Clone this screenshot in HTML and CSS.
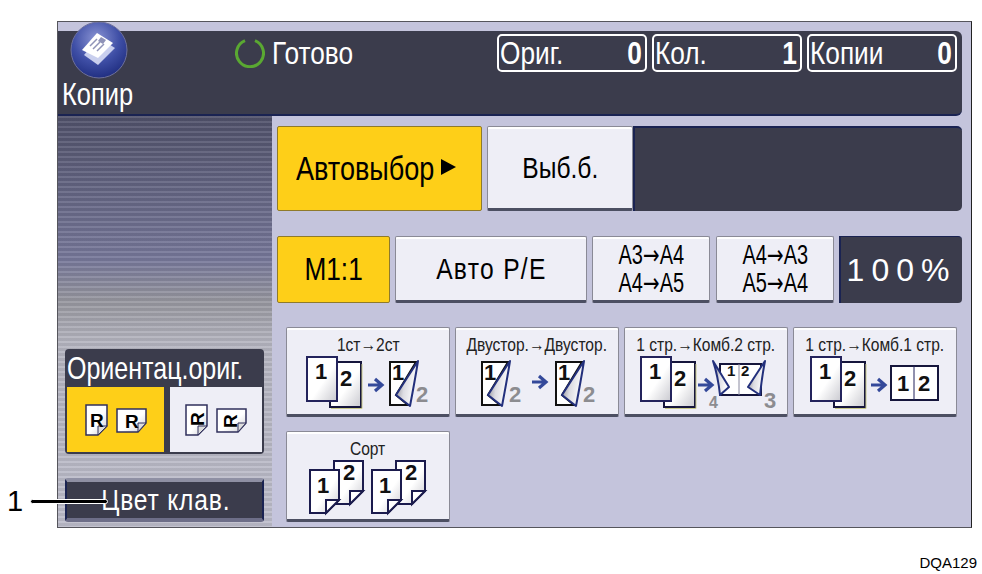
FILE: index.html
```html
<!DOCTYPE html>
<html lang="ru">
<head>
    <meta charset="UTF-8">
    <title>Копир</title>
    <link rel="stylesheet" href="styles.css">
</head>
<body>
<!-- shared icon parts -->
<svg class="defs" aria-hidden="true">
    <defs>
        <linearGradient id="sheet" x1="0" y1="0" x2="1" y2="1">
            <stop offset="0.55" stop-color="#ffffff"/>
            <stop offset="1" stop-color="#c9c9cf"/>
        </linearGradient>
        <linearGradient id="fold" x1="0" y1="0" x2="1" y2="0.3">
            <stop offset="0" stop-color="#77777f"/>
            <stop offset="0.5" stop-color="#dcdce2"/>
            <stop offset="1" stop-color="#ffffff"/>
        </linearGradient>
        <radialGradient id="ball" cx="0.45" cy="0.3" r="0.75">
            <stop offset="0" stop-color="#8a94d4"/>
            <stop offset="0.55" stop-color="#3f4fa6"/>
            <stop offset="1" stop-color="#1c2a7c"/>
        </radialGradient>
        <symbol id="pair" viewBox="0 0 56 52" overflow="visible">
            <rect x="24" y="6" width="31" height="45" fill="url(#sheet)" stroke="#16163c" stroke-width="2"/>
            <path d="M25 52.500H56V8" fill="none" stroke="#c9c98a" stroke-width="1"/>
            <text x="34" y="30" class="num">2</text>
            <rect x="1" y="1" width="30" height="44" fill="url(#sheet)" stroke="#23235c" stroke-width="2"/>
            <text x="9" y="23" class="num">1</text>
        </symbol>
        <symbol id="flip" viewBox="0 0 32 47" overflow="visible">
            <path d="M1 2H27L7 35L19 45H1Z" fill="#fff" stroke="#111" stroke-width="2"/>
            <path d="M29 1L7 35L21 46Q26 20 29 1Z" fill="url(#fold)" stroke="#23307c" stroke-width="2" stroke-linejoin="round"/>
            <text x="3" y="20" class="num">1</text>
        </symbol>
        <symbol id="go" viewBox="0 0 16 14" overflow="visible">
            <path d="M0 7H13M7 1L14 7L7 13" fill="none" stroke="#34499a" stroke-width="3.200"/>
        </symbol>
        <symbol id="sheet1" viewBox="0 0 32 46" overflow="visible">
            <path d="M1 1H30V31L17 44H1Z" fill="url(#sheet)" stroke="#1b1b4d" stroke-width="2"/>
            <path d="M17 44V31H30Z" fill="#fff" stroke="#1b1b4d" stroke-width="2"/>
            <text x="8" y="24" class="num">1</text>
        </symbol>
        <symbol id="sheet2" viewBox="0 0 32 46" overflow="visible">
            <path d="M1 1H30V31L17 44H1Z" fill="url(#sheet)" stroke="#1b1b4d" stroke-width="2"/>
            <path d="M17 44V31H30Z" fill="#fff" stroke="#1b1b4d" stroke-width="2"/>
            <text x="10" y="20" class="num">2</text>
        </symbol>
        <symbol id="tall" viewBox="0 0 24 32" overflow="visible">
            <path d="M1 1H22V22L13 31H1Z" fill="url(#sheet)" stroke="#30305c" stroke-width="1.500"/>
            <path d="M13 31V22H22Z" fill="#ddd" stroke="#30305c" stroke-width="1"/>
        </symbol>
        <symbol id="wide" viewBox="0 0 32 25" overflow="visible">
            <path d="M1 1H30V15L22 24H1Z" fill="url(#sheet)" stroke="#30305c" stroke-width="1.500"/>
            <path d="M22 24V15H30Z" fill="#ddd" stroke="#30305c" stroke-width="1"/>
        </symbol>
    </defs>
</svg>

<div class="screen">
    <header class="topbar">
        <div class="app">
            <svg class="app-icon" width="58" height="57" viewBox="0 0 58 57">
                <circle cx="29" cy="28" r="28" fill="url(#ball)" stroke="#6d709c"/>
                <path d="M14 33L29 16L45 26L28 43Z" fill="#c9cfee"/>
                <path d="M12 28L27 11L43 21L28 36Z" fill="#fff"/>
                <path d="M20 24L27 17M23 27L30 20M27 29L34 22" stroke="#8f93b8" stroke-width="1.500"/>
                <path d="M31 15L36 18L33 22L28 19Z" fill="#8f93b8"/>
            </svg>
            <span class="app-name sq sq-l">Копир</span>
        </div>
        <div class="status">
            <svg width="30" height="30" viewBox="0 0 30 30">
                <path d="M10 2.600A13.500 13.500 0 1 0 20 2.600" fill="none" stroke="#5aa832" stroke-width="3"/>
            </svg>
            <span class="sq sq-l">Готово</span>
        </div>
        <div class="counters">
            <div class="counter"><span class="sq sq-l">Ориг.</span><span class="count sq sq-r">0</span></div>
            <div class="counter"><span class="sq sq-l">Кол.</span><span class="count sq sq-r">1</span></div>
            <div class="counter"><span class="sq sq-l">Копии</span><span class="count sq sq-r">0</span></div>
        </div>
    </header>

    <div class="content">
        <aside class="side">
            <div class="orient">
                <div class="orient-title"><span class="sq sq-l">Ориентац.ориг.</span></div>
                <div class="orient-btns">
                    <button class="orient-btn on">
                        <svg width="62" height="34" viewBox="0 0 62 34">
                            <use href="#tall" x="0" y="1" width="24" height="32"/>
                            <text x="5" y="24" class="letter">R</text>
                            <use href="#wide" x="31" y="5" width="32" height="25"/>
                            <text x="40" y="25" class="letter">R</text>
                        </svg>
                    </button>
                    <button class="orient-btn">
                        <svg width="62" height="34" viewBox="0 0 62 34">
                            <use href="#tall" x="0" y="1" width="24" height="32"/>
                            <text class="letter" transform="translate(19 23) rotate(-90)">R</text>
                            <use href="#wide" x="31" y="5" width="32" height="25"/>
                            <text class="letter" transform="translate(52 25) rotate(-90)">R</text>
                        </svg>
                    </button>
                </div>
            </div>
            <button class="keycolor"><span class="sq">Цвет клав.</span></button>
        </aside>

        <main class="main">
            <div class="row row-paper">
                <button class="btn yellow auto"><span class="sq sq-l">Автовыбор</span><span class="tri"></span></button>
                <button class="btn pick"><span class="sq">Выб.б.</span></button>
                <div class="msg"></div>
            </div>

            <div class="row row-zoom">
                <button class="btn yellow w113"><span class="sq m11">M1:1</span></button>
                <button class="btn w192"><span class="sq">Авто Р/Е</span></button>
                <button class="btn w118 two"><span class="sq tight">A3<span class="arr">→</span>A4<br>A4<span class="arr">→</span>A5</span></button>
                <button class="btn w118 two"><span class="sq tight">A4<span class="arr">→</span>A3<br>A5<span class="arr">→</span>A4</span></button>
                <div class="percent">100%</div>
            </div>

            <div class="row row-dup">
                <button class="btn tile">
                    <span class="tile-name sq">1ст→2ст</span>
                    <svg width="130" height="52" viewBox="0 0 130 52">
                        <use href="#pair" x="3" y="0" width="56" height="52"/>
                        <use href="#go" x="65" y="22" width="16" height="14"/>
                        <use href="#flip" x="86" y="4" width="32" height="47"/>
                        <text x="113" y="46" class="ghost">2</text>
                    </svg>
                </button>
                <button class="btn tile">
                    <span class="tile-name sq">Двустор.→Двустор.</span>
                    <svg width="130" height="52" viewBox="0 0 130 52">
                        <use href="#flip" x="9" y="4" width="32" height="47"/>
                        <text x="37" y="46" class="ghost">2</text>
                        <use href="#go" x="60" y="19" width="16" height="14"/>
                        <use href="#flip" x="83" y="4" width="32" height="47"/>
                        <text x="111" y="46" class="ghost">2</text>
                    </svg>
                </button>
                <button class="btn tile">
                    <span class="tile-name sq">1 стр.→Комб.2 стр.</span>
                    <svg width="138" height="52" viewBox="0 0 138 52">
                        <use href="#pair" x="3" y="0" width="56" height="52"/>
                        <use href="#go" x="61" y="22" width="16" height="14"/>
                        <path d="M83 8H124V39H83Z" fill="#fff" stroke="#16163c" stroke-width="2"/>
                        <path d="M102 8V39" stroke="#8a8aa0"/>
                        <path d="M76 5L92 31L83 39Q81 20 76 5Z" fill="url(#fold)" stroke="#23307c" stroke-width="2" stroke-linejoin="round"/>
                        <path d="M128 5L111 31L123 39Q125 20 128 5Z" fill="url(#fold)" stroke="#23307c" stroke-width="2" stroke-linejoin="round"/>
                        <text x="90" y="20" class="num small">1</text>
                        <text x="104" y="20" class="num small">2</text>
                        <text x="72" y="52" class="ghost small">4</text>
                        <text x="127" y="52" class="ghost">3</text>
                    </svg>
                </button>
                <button class="btn tile">
                    <span class="tile-name sq">1 стр.→Комб.1 стр.</span>
                    <svg width="130" height="52" viewBox="0 0 130 52">
                        <use href="#pair" x="0" y="0" width="56" height="52"/>
                        <use href="#go" x="61" y="22" width="16" height="14"/>
                        <rect x="81" y="10" width="47" height="34" fill="#fff" stroke="#16163c" stroke-width="2"/>
                        <path d="M104 10V44" stroke="#23235c"/>
                        <text x="87" y="35" class="num">1</text>
                        <text x="108" y="35" class="num">2</text>
                    </svg>
                </button>
            </div>

            <div class="row row-sort">
                <button class="btn tile">
                    <span class="tile-name sq">Сорт</span>
                    <svg width="118" height="56" viewBox="0 0 118 56">
                        <use href="#sheet2" x="24" y="0" width="32" height="46"/>
                        <use href="#sheet1" x="0" y="9" width="32" height="46"/>
                        <use href="#sheet2" x="86" y="0" width="32" height="46"/>
                        <use href="#sheet1" x="62" y="9" width="32" height="46"/>
                    </svg>
                </button>
            </div>
        </main>
    </div>
</div>

<footer class="code">DQA129</footer>

<!-- callout over the screen -->
<div class="callout">
    <span class="callout-num">1</span>
    <span class="callout-line"></span>
</div>
</body>
</html>
```

FILE: styles.css
```css
* {
    box-sizing: border-box;
}
body {
    margin: 0;
    width: 982px;
    height: 574px;
    overflow: hidden;
    position: relative;
    background: #fff;
    font-family: "Liberation Sans", Arial, sans-serif;
    font-size: 30px;
    color: #000;
}
button {
    font: inherit;
    color: inherit;
    padding: 0;
}
.defs {
    display: block;
    width: 0;
    height: 0;
}
/* the panel font is a condensed one, squeeze Liberation to its width */
.sq {
    display: inline-block;
    white-space: nowrap;
    transform: scaleX(0.82);
}
.sq-l {
    transform-origin: left center;
}
.sq-r {
    transform-origin: right center;
}
.tight {
    transform: scaleX(0.74);
}
.arr {
    font-family: "DejaVu Sans", sans-serif;
}
.num {
    font-weight: bold;
    font-size: 22px;
    fill: #111;
}
.num.small {
    font-size: 15px;
}
.ghost {
    font-weight: bold;
    font-size: 22px;
    fill: #8c8c90;
}
.ghost.small {
    font-size: 16px;
}
.letter {
    font-weight: bold;
    font-size: 19px;
    fill: #000;
}

.screen {
    margin: 21px 0 0 57px;
    width: 915px;
    height: 507px;
    border: 1px solid #55555c;
    border-right-color: #222;
    background: #c4c4dc;
    padding-top: 9px;
}

/* top bar */
.topbar {
    display: flex;
    align-items: flex-start;
    width: 904px;
    height: 85px;
    padding-left: 4px;
    background: #3b3c4c;
    border-bottom: 2px solid #1a2352;
    border-radius: 0 6px 6px 0;
    color: #fff;
}
.app {
    width: 173px;
    display: flex;
    flex-direction: column;
    align-items: flex-start;
}
.app-icon {
    display: block;
    margin: -9px 0 0 8px;
}
.app-name {
    font-size: 31px;
    line-height: 30px;
    margin-top: 1px;
}
.status {
    display: flex;
    align-items: center;
    gap: 7px;
    margin-top: 7px;
    font-size: 32px;
    line-height: 30px;
}
.counters {
    display: flex;
    gap: 5px;
    margin-left: auto;
    margin-right: 5px;
    margin-top: 3px;
    font-size: 32px;
}
.counter {
    width: 150px;
    height: 38px;
    display: flex;
    justify-content: space-between;
    align-items: center;
    padding: 0 3px 0 1px;
    border: 2px solid #fff;
    border-radius: 5px;
}
.count {
    font-weight: bold;
}

.content {
    display: flex;
    height: 411px;
}

/* left column */
.side {
    width: 214px;
    padding: 0 8px 5px 7px;
    display: flex;
    flex-direction: column;
    justify-content: flex-end;
    gap: 24px;
    background:
        repeating-linear-gradient(180deg, rgba(255, 255, 255, 0.09) 0 2px, rgba(0, 0, 0, 0.06) 2px 5px),
        linear-gradient(180deg, #50516a 0%, #77789a 35%, #97979f 45%, #b5b5c0 55%, #bdbdcb 100%);
}
.orient {
    height: 105px;
    background: #3b3c4c;
    border-radius: 4px;
    padding: 0 2px 2px;
    color: #fff;
}
.orient-title {
    height: 38px;
    line-height: 38px;
    font-size: 30.500px;
}
.orient-btns {
    display: flex;
    gap: 6px;
}
.orient-btn {
    width: 92px;
    height: 65px;
    border: 0;
    background: #eeeef6;
    display: flex;
    align-items: center;
    justify-content: center;
}
.orient-btn.on {
    width: 97px;
    background: #fecf18;
}
.keycolor {
    height: 44px;
    background: #3b3c4c;
    color: #fff;
    border: 0;
    border-top: 4px solid #8f90a4;
    border-bottom: 4px solid #6d6e88;
    border-left: 2px solid #1a2352;
    border-right: 2px solid #1a2352;
    border-radius: 3px;
    letter-spacing: 1px;
    padding-left: 3px;
}

/* main area */
.main {
    flex: 1;
    padding: 10px 9px 0 5px;
}
.row {
    display: flex;
    gap: 5px;
}
.btn {
    background: #eeeef6;
    border: 1px solid #8a8a96;
    border-bottom: 3px solid #4c4f62;
    border-radius: 2px;
    box-shadow: inset 0 2px 0 #fff;
}
.btn.yellow {
    background: #fecf18;
    border: 1px solid #8f7a2a;
    box-shadow: none;
}
.row-paper {
    height: 85px;
}
.auto {
    width: 205px;
    font-size: 33px;
    display: flex;
    align-items: center;
    padding-left: 18px;
}
.tri {
    width: 0;
    height: 0;
    margin-left: -24px;
    margin-top: -3px;
    border-left: 15px solid #000;
    border-top: 8px solid transparent;
    border-bottom: 8px solid transparent;
}
.pick {
    width: 146px;
}
.msg {
    flex: 1;
    margin-left: -5px;
    background: #3b3c4c;
    border-top: 2px solid #1a2352;
    border-left: 2px solid #1a2352;
    border-radius: 0 5px 5px 0;
}
.row-zoom {
    height: 67px;
    margin-top: 25px;
}
.w113 {
    width: 113px;
}
.m11 {
    font-size: 32px;
}
.w192 {
    width: 192px;
    letter-spacing: 1.600px;
}
.w118 {
    width: 118px;
}
.w118 + .w118 {
    margin-left: 1px;
}
.two {
    font-size: 27px;
    line-height: 27px;
}
.percent {
    flex: 1;
    background: #3b3c4c;
    border-left: 2px solid #1a2352;
    border-top: 1px solid #1a2352;
    border-radius: 0 4px 4px 0;
    color: #fff;
    font-size: 32px;
    letter-spacing: 7px;
    line-height: 66px;
    text-align: center;
}
.row-dup {
    height: 90px;
    margin: 24px 0 0 9px;
}
.row-sort {
    height: 91px;
    margin: 14px 0 0 9px;
}
.tile {
    width: 164px;
    display: flex;
    flex-direction: column;
    align-items: center;
    padding-top: 6px;
    font-size: 19px;
}
.tile-name {
    line-height: 22px;
    color: #222;
}
.tile svg {
    display: block;
    overflow: visible;
}

.code {
    margin: 27px 5px 0 0;
    text-align: right;
    font-size: 15px;
    line-height: 16px;
}

/* callout */
.callout {
    position: absolute;
    left: 7px;
    top: 484px;
    display: flex;
    align-items: center;
    gap: 7px;
    font-size: 29px;
    line-height: 34px;
}
.callout-line {
    width: 78px;
    height: 5px;
    background: #000;
    border: 1px solid #fff;
    border-radius: 3px;
}
```
